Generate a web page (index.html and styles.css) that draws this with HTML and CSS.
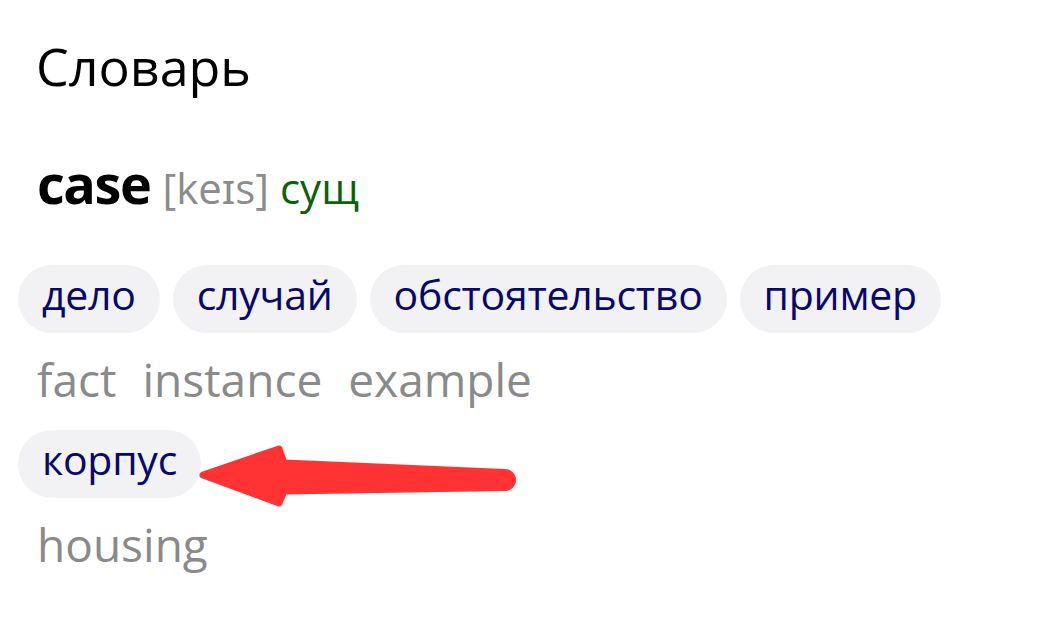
FILE: index.html
```html
<!DOCTYPE html>
<html lang="ru">
<head>
<meta charset="utf-8">
<link rel="stylesheet" href="styles.css">
</head>
<body>
<main class="page">
  <h1 class="title">Словарь</h1>
  <div class="headword"><span class="word">case</span> <span class="transcription">[keɪs]</span> <span class="pos">сущ</span></div>
  <section class="group">
    <div class="chips">
      <span class="chip">дело</span>
      <span class="chip">случай</span>
      <span class="chip">обстоятельство</span>
      <span class="chip">пример</span>
    </div>
    <div class="syns"><span>fact</span><span>instance</span><span>example</span></div>
  </section>
  <section class="group">
    <div class="chips">
      <span class="chip">корпус</span>
    </div>
    <div class="syns"><span>housing</span></div>
  </section>
  <svg class="arrow" width="1061" height="632" viewBox="0 0 1061 632">
    <path d="M203 475 L279 449 L284 463 L505 472.5 A7.5 7.5 0 0 1 505 487.5 L284 491 L279 503 Z" fill="#ff3333" stroke="#ff3333" stroke-width="7" stroke-linejoin="round"/>
  </svg>
</main>
</body>
</html>
```
FILE: styles.css
```css
html, body {
  margin: 0;
  padding: 0;
  background: #ffffff;
}
.page {
  position: relative;
  width: 1061px;
  height: 632px;
  box-sizing: border-box;
  padding: 31px 0 0 18px;
  font-family: "Open Sans", "Noto Sans", sans-serif;
  overflow: hidden;
}
.title {
  margin: 0 0 0 18px;
  font-weight: 400;
  font-size: 52px;
  line-height: 70px;
  color: #000;
}
.headword {
  margin: 52px 0 0 19px;
  font-size: 42px;
  line-height: 60px;
  white-space: nowrap;
}
.word {
  font-weight: 700;
  font-size: 54px;
  letter-spacing: -1.4px;
  color: #000;
  margin-right: 1px;
}
.transcription {
  color: #8c8c8c;
}
.pos {
  color: #0b620b;
}
.headword + .group {
  margin-top: 47px;
}
.chips {
  display: flex;
  flex-wrap: wrap;
  gap: 13px;
}
.chip {
  background: #f2f2f4;
  border-radius: 34px;
  height: 68px;
  box-sizing: border-box;
  line-height: 58px;
  padding: 0 24px 10px;
  font-size: 41px;
  letter-spacing: -0.25px;
  color: #07076e;
}
.syns {
  display: flex;
  gap: 26px;
  margin-left: 19px;
  font-size: 46px;
  line-height: 62px;
  padding: 15px 0 20px;
  color: #8a8a8a;
}
.arrow {
  position: absolute;
  left: 0;
  top: 0;
  pointer-events: none;
}
```
